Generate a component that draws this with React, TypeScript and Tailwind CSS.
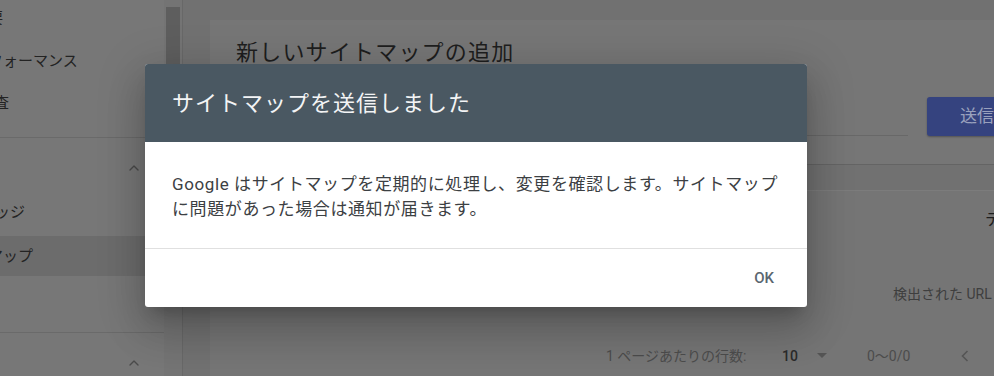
import React from 'react';
import { ChevronUp } from 'lucide-react';

const font = "font-['Roboto','Noto_Sans_CJK_JP',sans-serif]";

function NavItem({ label, offset, height, active }: { label: string; offset: string; height: string; active?: boolean }) {
  return (
    <div className={`flex shrink-0 items-center ${height} ${active ? 'bg-[#6c6c6c]' : ''}`}>
      <span className={`${offset} whitespace-nowrap text-[15px] text-[#232323]`}>{label}</span>
    </div>
  );
}

function SectionHeader({ height }: { height: string }) {
  return (
    <div className={`flex shrink-0 items-center justify-end pr-[22px] ${height}`}>
      <ChevronUp size={16} strokeWidth={2} className="text-[#4a4a4a]" />
    </div>
  );
}

export default function App() {
  return (
    <div className={`relative flex h-[376px] w-[994px] overflow-hidden bg-[#717171] ${font}`}>
      {/* Sidebar (dimmed behind the dialog) */}
      <aside className="flex w-[164px] shrink-0 flex-col overflow-hidden bg-[#777777]">
        <div className="-mt-[4px] shrink-0">
          <NavItem label="概要" offset="-ml-[27px]" height="h-[44px]" />
          <NavItem label="検索パフォーマンス" offset="-ml-[57px]" height="h-[42px]" />
          <NavItem label="検査" offset="-ml-[21px]" height="h-[42px]" />
        </div>
        <div className="mt-[13px] h-px shrink-0 bg-[#6a6a6a]" />
        <SectionHeader height="h-[54px] pt-[6px]" />
        <NavItem label="カバレッジ" offset="-ml-[50px]" height="h-[44px] pb-[4px]" />
        <NavItem label="サイトマップ" offset="-ml-[57px]" height="h-[40px]" active />
        <div className="h-[56px] shrink-0" />
        <div className="h-px shrink-0 bg-[#6a6a6a]" />
        <SectionHeader height="h-[56px] pt-[4px]" />
      </aside>

      {/* Scrollbar */}
      <div className="w-[19px] shrink-0 border-r border-[#686868] bg-[#747474] px-[2px] pt-[7px]">
        <div className="h-[120px] bg-[#5e5e5e]" />
      </div>

      {/* Main content */}
      <main className="flex min-w-0 flex-1 flex-col gap-[25px] pl-[27px] pt-[20px]">
        <section className="h-[145px] w-[830px] shrink-0 border-b border-[#646464] bg-[#767676] pl-[26px] pt-[18px]">
          <h2 className="text-[22px] leading-[30px] tracking-[1.2px] text-[#1e1e1e]">新しいサイトマップの追加</h2>
          <div className="mt-[29px] flex items-end gap-[19px]">
            <div className="h-[36px] w-[672px] border-b border-[#686868]" />
            <button className="flex h-[39px] w-[100px] items-center justify-center rounded-[3px] bg-[#35437f] text-[17px] text-[#9aa1bd] shadow-[0_1px_2px_rgba(0,0,0,0.3)]">
              送信
            </button>
          </div>
        </section>

        <section className="w-[830px] flex-1 shrink-0 border-t border-[#7c7c7c] bg-[#757575] pt-[19px]">
          <div className="ml-[775px] flex h-[20px] items-center whitespace-nowrap text-[16px] text-[#1e1e1e]">
            テーブル
          </div>
          <div className="ml-[683px] mt-[54px] flex h-[20px] items-center whitespace-nowrap text-[14px] text-[#3e3e3e]">
            検出された URL
          </div>
          <div className="ml-[396px] mt-[42px] flex h-[20px] items-center whitespace-nowrap text-[14px] text-[#4c4c4c]">
            <span className="w-[176px]">1 ページあたりの行数:</span>
            <span className="font-medium text-[#2b2b2b]">10</span>
            <svg width="10" height="6" viewBox="0 0 10 6" className="ml-[19px]">
              <path d="M0 0 L10 0 L5 5 Z" fill="#555555" />
            </svg>
            <span className="ml-[40px]">0〜0/0</span>
            <svg width="8" height="12" viewBox="0 0 8 12" className="ml-[51px]">
              <path d="M6.5 1 L1.5 6 L6.5 11" stroke="#555555" strokeWidth="1.6" fill="none" />
            </svg>
          </div>
        </section>
      </main>

      {/* Dialog */}
      <div className="absolute left-[145px] top-[64px] w-[662px] overflow-hidden rounded-[3px] bg-white shadow-[0_11px_15px_-7px_rgba(0,0,0,0.2),0_24px_38px_3px_rgba(0,0,0,0.14),0_9px_46px_8px_rgba(0,0,0,0.12)]">
        <div className="flex h-[78px] items-center bg-[#4a5862] px-[27px]">
          <h1 className="text-[22px] tracking-[1px] text-[#f3f4f5]">サイトマップを送信しました</h1>
        </div>
        <div className="h-[106px] px-[27px] pt-[30px]">
          <p className="whitespace-nowrap text-[17px] leading-[25px] tracking-[0.6px] text-[#3c4043]">
            Google はサイトマップを定期的に処理し、変更を確認します。サイトマップ
            <br />
            に問題があった場合は通知が届きます。
          </p>
        </div>
        <div className="flex h-[59px] items-center justify-end border-t border-[#e0e0e0] pr-[33px]">
          <button className="text-[15px] font-medium text-[#5a6670]">OK</button>
        </div>
      </div>
    </div>
  );
}
